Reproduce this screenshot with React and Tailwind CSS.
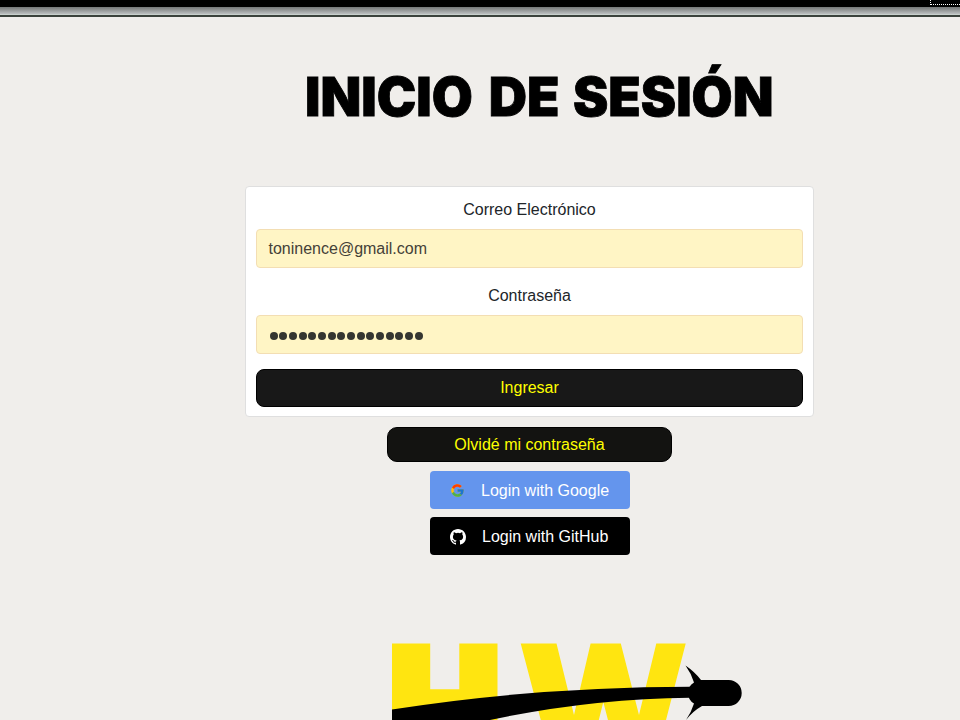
import React from "react";

function GoogleIcon() {
  return (
    <svg className="h-[15px] w-[15px] shrink-0" viewBox="0 0 48 48">
      <path fill="#FFC107" d="M43.6 20H24v8h11.3C33.7 32.7 29.2 36 24 36a12 12 0 1 1 7.9-21l5.7-5.7A20 20 0 1 0 43.6 20z" />
      <path fill="#FF3D00" d="M6.3 14.7l6.6 4.8A12 12 0 0 1 31.9 15l5.7-5.7A20 20 0 0 0 6.3 14.7z" />
      <path fill="#4CAF50" d="M24 44c5.2 0 9.9-2 13.4-5.2l-6.2-5.2A12 12 0 0 1 12.7 28l-6.5 5A20 20 0 0 0 24 44z" />
      <path fill="#1976D2" d="M43.6 20H24v8h11.3a12 12 0 0 1-4.1 5.6l6.2 5.2C37 39.2 44 34 44 24c0-1.3-.1-2.7-.4-4z" />
    </svg>
  );
}

function GitHubIcon() {
  return (
    <svg className="h-4 w-4 shrink-0" viewBox="0 0 16 16" fill="#fff">
      <path d="M8 0C3.58 0 0 3.58 0 8c0 3.54 2.29 6.53 5.47 7.59.4.07.55-.17.55-.38 0-.19-.01-.82-.01-1.49-2.01.37-2.53-.49-2.69-.94-.09-.23-.48-.94-.82-1.13-.28-.15-.68-.52-.01-.53.63-.01 1.08.58 1.23.82.72 1.21 1.87.87 2.33.66.07-.52.28-.87.51-1.07-1.78-.2-3.64-.89-3.64-3.95 0-.87.31-1.59.82-2.15-.08-.2-.36-1.02.08-2.12 0 0 .67-.21 2.2.82a7.6 7.6 0 0 1 4 0c1.53-1.04 2.2-.82 2.2-.82.44 1.1.16 1.92.08 2.12.51.56.82 1.27.82 2.15 0 3.07-1.87 3.75-3.65 3.95.29.25.54.73.54 1.48 0 1.07-.01 1.93-.01 2.2 0 .21.15.46.55.38A8.01 8.01 0 0 0 16 8c0-4.42-3.58-8-8-8z" />
    </svg>
  );
}

function Logo() {
  return (
    <svg className="mt-[75px] ml-[380px] block h-[90px] w-[380px]" viewBox="380 630 380 90">
      <g fill="#ffe510">
        <path d="M392 643.5h38.2v45.7h29.1v-45.7h38.2V720H392z" />
        <path d="M520.7 643.5h35.8L574 715l16.6-71.5h30.2L639 715l17.3-71.5h29.4L665.5 722h-57l-5.2-20-5 20h-57z" />
      </g>
      <path d="M392 709.5Q535 687 690 686.7V697.7Q590 698.7 490 720H392z" />
      <path d="M701 680h27.7a13 13 0 0 1 0 26H702Q693 711 686 720Q691 713 694 703.5Q688 700 688 693Q688 686 694 682.5Q691 673 685.5 665.5Q695 672 701 680z" />
    </svg>
  );
}

export default function App() {
  return (
    <div className="h-[720px] w-[960px] overflow-hidden bg-[#f0eeeb] font-['Liberation_Sans',Arial,sans-serif] text-base text-[#212529]">
      <header className="flex h-[17px] flex-col">
        <div className="flex h-[7px] justify-end bg-black">
          <div className="h-[5px] w-[30px] border-b border-l border-dotted border-white" />
        </div>
        <div className="h-[7px] bg-linear-to-b from-[#747777] to-[#bcbfc0]" />
        <div className="h-px bg-[#c8d0cc]" />
        <div className="h-[2px] bg-[#3b423c]" />
      </header>

      <h1 className="mt-[47px] ml-[305px] flex h-[66px] items-center font-['Inter',sans-serif] text-[53px] leading-[66px] font-black whitespace-nowrap text-black [-webkit-text-stroke:0.8px_black]">
        <span>INICIO</span>{" "}
        <span className="ml-4">DE</span>{" "}
        <span className="ml-[13.5px]">SESIÓN</span>
      </h1>

      <main className="mt-[56px] ml-[245px] flex w-[569px] flex-col items-center">
        <form className="flex h-[231px] w-full flex-col rounded border border-[#dfdfdf] bg-white px-[10px] pt-[11px]">
          <label className="block h-6 text-center leading-6">Correo Electrónico</label>
          <div className="mt-[7px] flex h-[39px] shrink-0 items-center rounded border border-[#f3deb3] bg-[#fff5c5] px-[11.5px] text-[#454138]">
            toninence@gmail.com
          </div>
          <label className="mt-4 block h-6 text-center leading-6">Contraseña</label>
          <div className="mt-[7px] flex h-[39px] shrink-0 items-center gap-[1.7px] rounded border border-[#f3deb3] bg-[#fff5c5] px-[12.5px] pt-[2px]">
            {Array.from({ length: 16 }, (_, i) => (
              <span key={i} className="h-2 w-2 rounded-full bg-[#353631]" />
            ))}
          </div>
          <button type="button" className="mt-[15px] h-[38px] shrink-0 rounded-lg border border-black bg-[#181818] text-[#ffff00]">
            Ingresar
          </button>
        </form>
        <button type="button" className="mt-[10px] h-[35px] w-[285px] rounded-[10px] border border-black bg-[#131311] text-[#ffff00]">
          Olvidé mi contraseña
        </button>
        <button type="button" className="mt-[9px] ml-px flex h-[38px] w-[200px] items-center rounded bg-[#6495ed] pt-px pl-5 text-white">
          <GoogleIcon />
          <span className="ml-4">Login with Google</span>
        </button>
        <button type="button" className="mt-2 ml-px flex h-[38px] w-[200px] items-center rounded bg-black pt-px pl-5 text-white">
          <GitHubIcon />
          <span className="ml-4">Login with GitHub</span>
        </button>
      </main>
      <Logo />
    </div>
  );
}
